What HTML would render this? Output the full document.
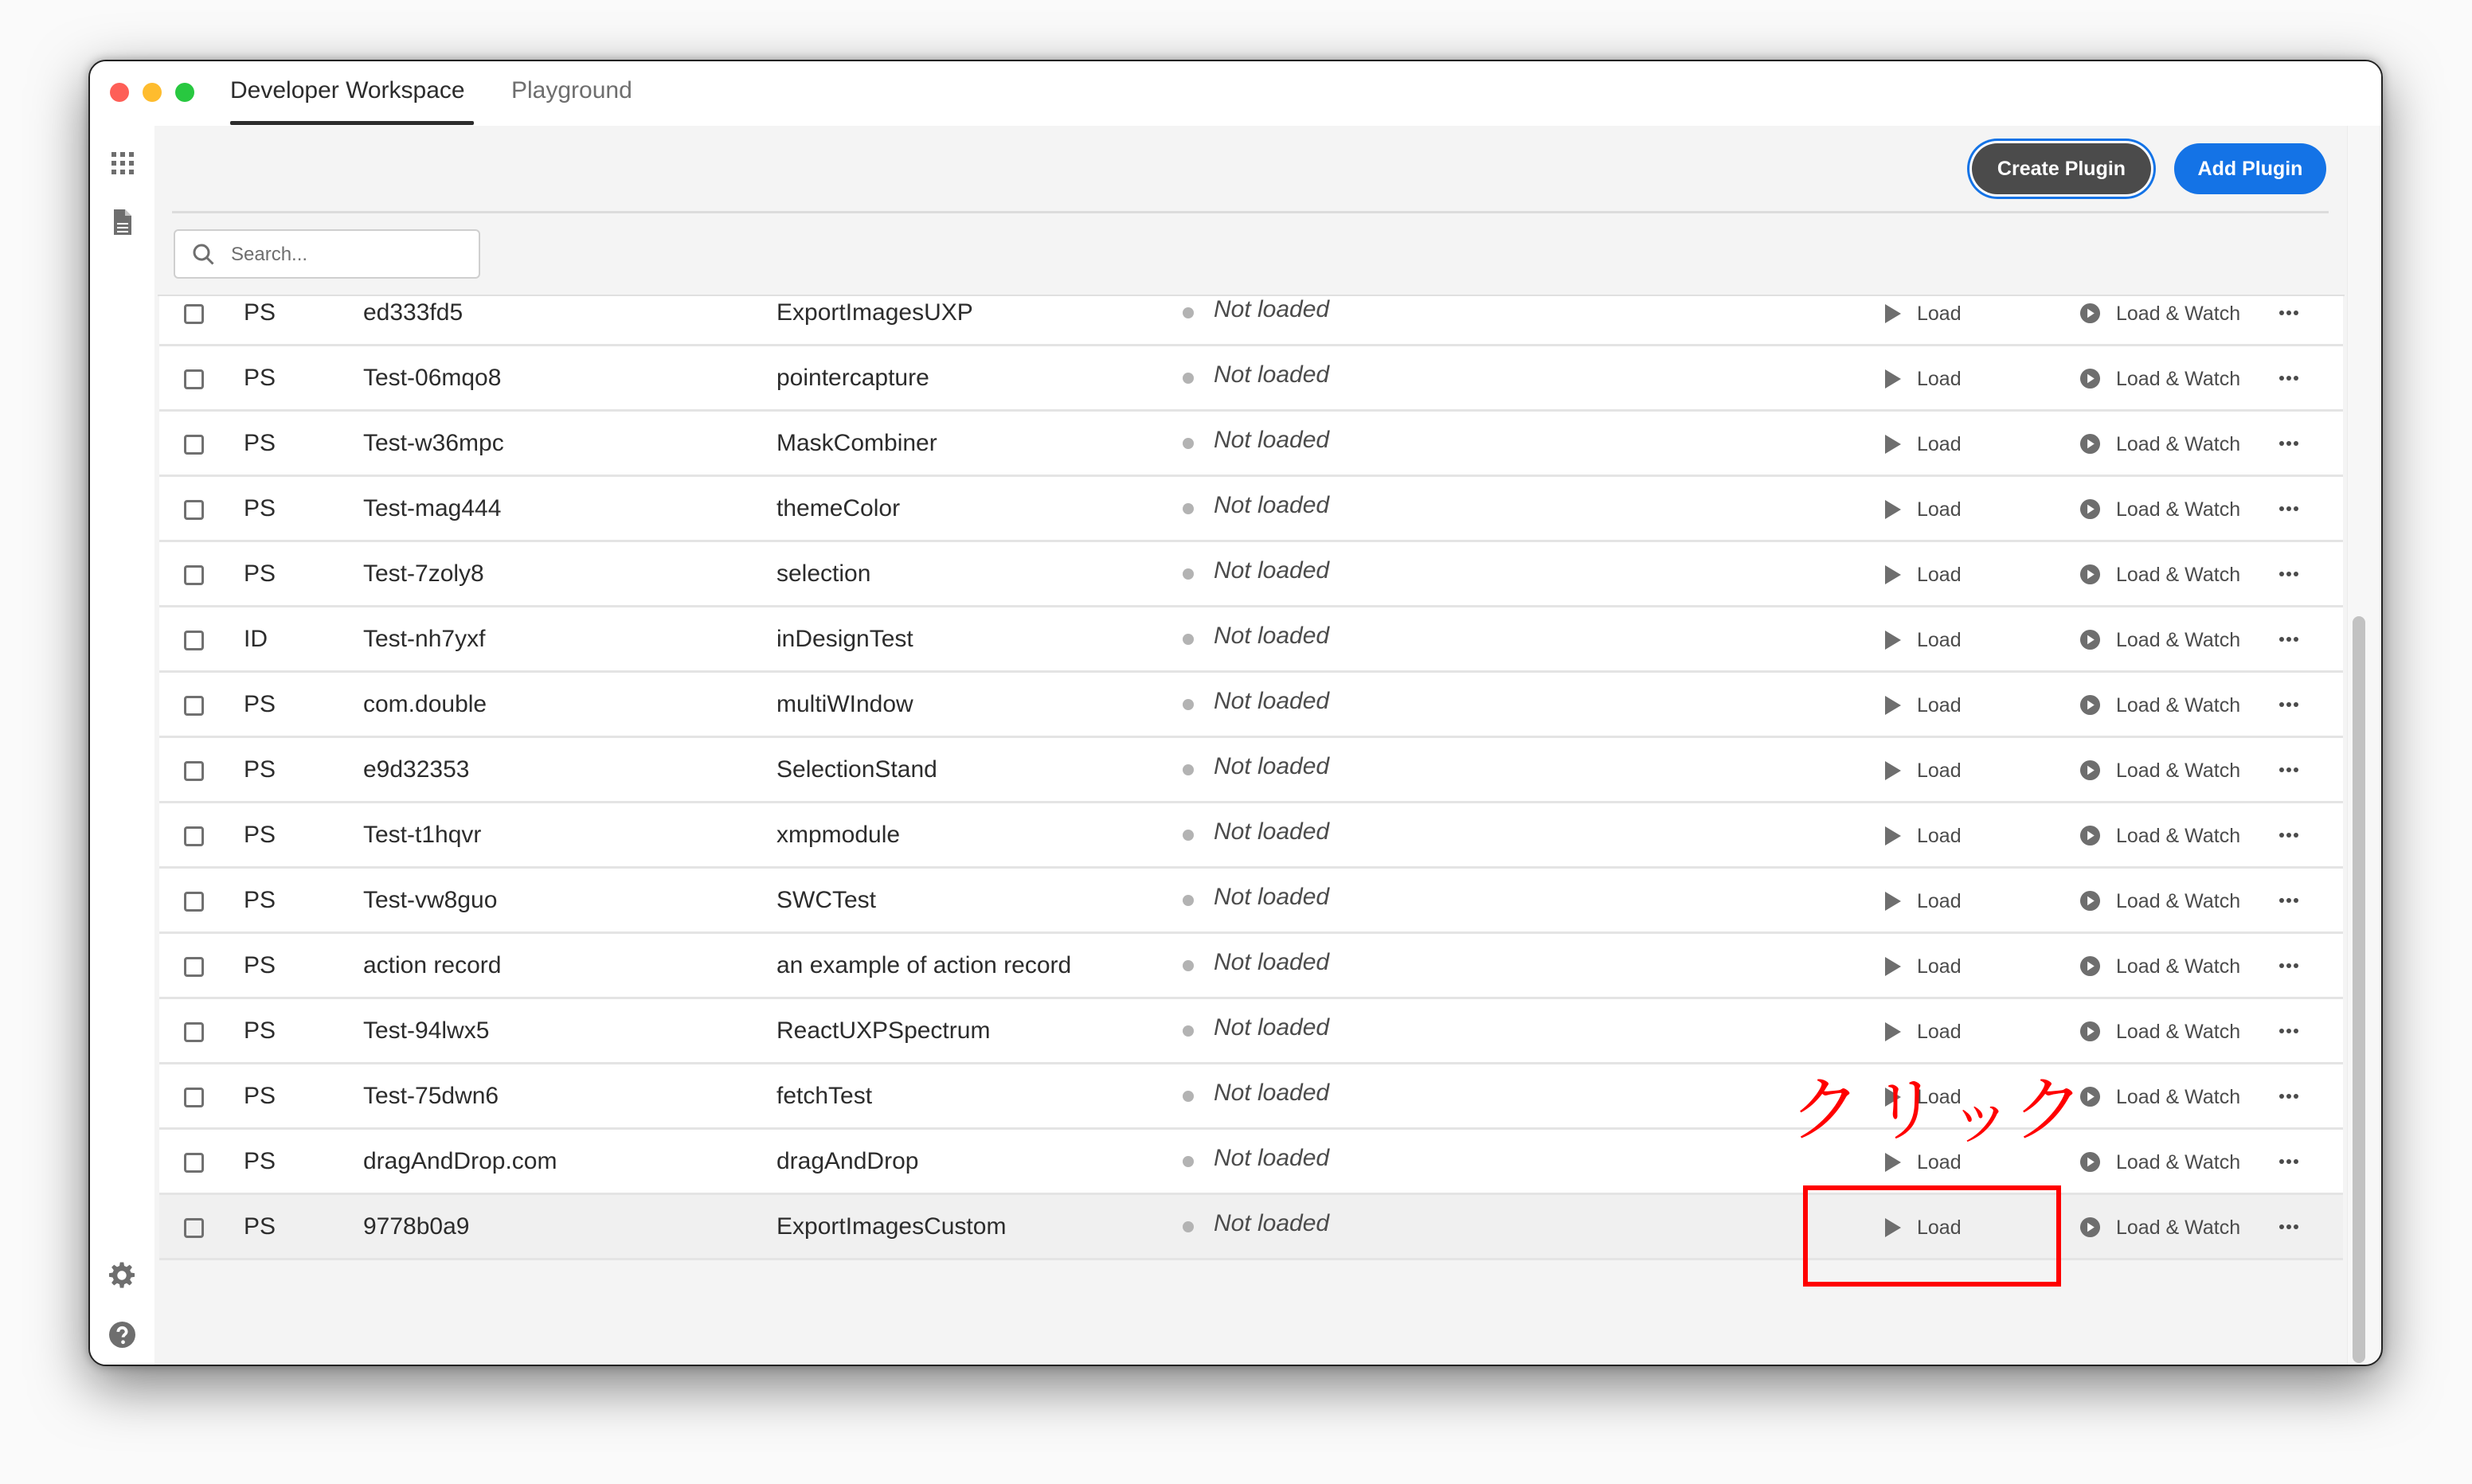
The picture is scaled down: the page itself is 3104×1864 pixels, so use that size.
<!DOCTYPE html>
<html><head><meta charset="utf-8"><style>
*{margin:0;padding:0;box-sizing:border-box}
body{width:3104px;height:1864px;background:#fafafa;position:relative;overflow:hidden;font-family:"Liberation Sans",sans-serif}
.win{position:absolute;left:111px;top:75px;width:2881px;height:1641px;border-radius:22px;background:#f4f4f4;border:2px solid #222;overflow:hidden;box-shadow:0 24px 70px rgba(0,0,0,.5),0 0 12px rgba(0,0,0,.3)}
.title{position:absolute;left:0;top:0;width:100%;height:81px;background:#fff}
.light{position:absolute;top:27px;width:24px;height:24px;border-radius:50%}
.tab{position:absolute;top:20px;font-size:30px;color:#2c2c2c}
.side{position:absolute;left:0;top:81px;width:81px;bottom:0;background:#fff}
.abs{position:absolute}
.btn{position:absolute;height:64px;border-radius:32px;color:#fff;font-weight:bold;font-size:25px;line-height:64px;text-align:center}
.rows{position:absolute;left:87px;top:295px;width:2742px;height:1212px;overflow:hidden}
.inner{position:absolute;left:0;top:-19px;width:100%}
.row{position:relative;height:82px;background:#fff;border-bottom:3px solid #e4e4e4;font-size:30px;color:#2c2c2c}
.row span{position:absolute;top:23px}
.cb{position:absolute;left:31px;top:29px;width:25px;height:25px;border:3px solid #707070;border-radius:4px}
.dot{position:absolute;left:1285px;top:33px;width:14px;height:14px;border-radius:50%;background:#b3b3b3}
.nl{font-style:italic;color:#4b4b4b}
.sm{font-size:25px;color:#4b4b4b;top:27px!important}
</style></head><body>
<div class="win">
 <div class="title">
  <div class="light" style="left:25px;background:#fe5f57"></div>
  <div class="light" style="left:66px;background:#febc2e"></div>
  <div class="light" style="left:107px;background:#28c840"></div>
  <div class="tab" style="left:176px">Developer Workspace</div>
  <div class="abs" style="left:176px;top:75px;width:306px;height:5px;background:#2c2c2c;border-radius:2px"></div>
  <div class="tab" style="left:529px;color:#6e6e6e">Playground</div>
 </div>
 <div class="side">
  <svg class="abs" style="left:25px;top:31px" width="32" height="32" viewBox="0 0 32 32" fill="#6e6e6e"><rect x="2" y="2" width="6" height="6"/><rect x="13" y="2" width="6" height="6"/><rect x="24" y="2" width="6" height="6"/><rect x="2" y="13" width="6" height="6"/><rect x="13" y="13" width="6" height="6"/><rect x="24" y="13" width="6" height="6"/><rect x="2" y="24" width="6" height="6"/><rect x="13" y="24" width="6" height="6"/><rect x="24" y="24" width="6" height="6"/></svg>
  <svg class="abs" style="left:28px;top:104px" width="26" height="34" viewBox="0 0 26 34"><path d="M2 1h14l8 8v24H2z" fill="#6e6e6e"/><path d="M16 1v8h8" fill="#fff" opacity=".6"/><path d="M6 19h14M6 24h14M6 29h14" stroke="#fff" stroke-width="2"/></svg>
  <svg class="abs" style="left:22px;top:1426px" width="36" height="36" viewBox="0 0 24 24" fill="#6e6e6e"><path d="M10.5 1h3l.5 3 2 .9 2.5-1.8 2.1 2.1-1.8 2.5.9 2 3 .5v3l-3 .5-.9 2 1.8 2.5-2.1 2.1-2.5-1.8-2 .9-.5 3h-3l-.5-3-2-.9-2.5 1.8-2.1-2.1 1.8-2.5-.9-2-3-.5v-3l3-.5.9-2L3.4 5.2l2.1-2.1L8 4.9l2-.9z"/><circle cx="12" cy="12" r="3.8" fill="#fff"/></svg>
  <svg class="abs" style="left:24px;top:1502px" width="33" height="33" viewBox="0 0 32 32"><circle cx="16" cy="16" r="16" fill="#6e6e6e"/><path d="M11 12.5a5 5 0 0 1 10 0c0 3-4 3.5-4 6.5" stroke="#fff" stroke-width="3.6" fill="none"/><circle cx="17" cy="25" r="2.3" fill="#fff"/></svg>
 </div>
 <div class="btn" style="left:2363px;top:103px;width:225px;background:#4b4b4b;box-shadow:0 0 0 3px #fff,0 0 0 6px #1473e6">Create Plugin</div>
 <div class="btn" style="left:2617px;top:103px;width:191px;background:#1473e6">Add Plugin</div>
 <div class="abs" style="left:103px;top:188px;width:2708px;height:3px;background:#dcdcdc"></div>
 <div class="abs" style="left:105px;top:211px;width:385px;height:62px;background:#fff;border:2px solid #cfcfcf;border-radius:6px">
  <svg class="abs" style="left:20px;top:14px" width="32" height="32" viewBox="0 0 32 32"><circle cx="13" cy="13" r="9" stroke="#6e6e6e" stroke-width="3" fill="none"/><path d="M19.5 19.5l8 8" stroke="#6e6e6e" stroke-width="3"/></svg>
  <div class="abs" style="left:70px;top:16px;font-size:24px;color:#6e6e6e">Search...</div>
 </div>
 <div class="abs" style="left:85px;top:293px;width:2746px;height:2px;background:#e0e0e0"></div>
 <div class="rows"><div class="inner" id="inner"></div></div>
 <div class="abs" style="left:2834px;top:81px;width:40px;bottom:0;background:#f7f7f7;border-left:1px solid #ececec"></div>
 <div class="abs" style="left:2841px;top:697px;width:16px;height:938px;background:#c2c2c2;border-radius:8px"></div>
</div>
<div class="abs" style="left:2247px;top:1336px;font-family:'Noto Serif CJK JP','Noto Sans CJK JP',serif;font-size:90px;color:#f00;line-height:100px;white-space:nowrap"><span class="abs" style="left:0">ク</span><span class="abs" style="left:100px;transform:scaleX(.9)">リ</span><span class="abs" style="left:200px;top:10px;font-size:80px">ッ</span><span class="abs" style="left:280px">ク</span></div>
<div class="abs" style="left:2264px;top:1489px;width:324px;height:127px;border:6px solid #f00"></div>
<script>
var d=[["PS","ed333fd5","ExportImagesUXP"],["PS","Test-06mqo8","pointercapture"],["PS","Test-w36mpc","MaskCombiner"],["PS","Test-mag444","themeColor"],["PS","Test-7zoly8","selection"],["ID","Test-nh7yxf","inDesignTest"],["PS","com.double","multiWIndow"],["PS","e9d32353","SelectionStand"],["PS","Test-t1hqvr","xmpmodule"],["PS","Test-vw8guo","SWCTest"],["PS","action record","an example of action record"],["PS","Test-94lwx5","ReactUXPSpectrum"],["PS","Test-75dwn6","fetchTest"],["PS","dragAndDrop.com","dragAndDrop"],["PS","9778b0a9","ExportImagesCustom"]];
var h="";d.forEach(function(r,i){h+='<div class="row"'+(i==14?' style="background:#f0f0f0"':'')+'><div class="cb"></div><span style="left:106px">'+r[0]+'</span><span style="left:256px">'+r[1]+'</span><span style="left:775px">'+r[2]+'</span><div class="dot"></div><span class="nl" style="left:1324px;top:19px">Not loaded</span>'+
'<svg style="position:absolute;left:2166px;top:28px" width="22" height="26" viewBox="0 0 22 26"><path d="M1 1l20 12L1 25z" fill="#6e6e6e"/></svg><span class="sm" style="left:2207px">Load</span>'+
'<svg style="position:absolute;left:2411px;top:27px" width="27" height="27" viewBox="0 0 28 28"><circle cx="14" cy="14" r="13" fill="#6e6e6e"/><path d="M10.5 8l9 6-9 6z" fill="#fff"/></svg><span class="sm" style="left:2457px">Load &amp; Watch</span>'+
'<svg style="position:absolute;left:2662px;top:36px" width="24" height="8"><circle cx="3" cy="4" r="3" fill="#4b4b4b"/><circle cx="12" cy="4" r="3" fill="#4b4b4b"/><circle cx="21" cy="4" r="3" fill="#4b4b4b"/></svg></div>'});
document.getElementById("inner").innerHTML=h;
</script>
</body></html>
